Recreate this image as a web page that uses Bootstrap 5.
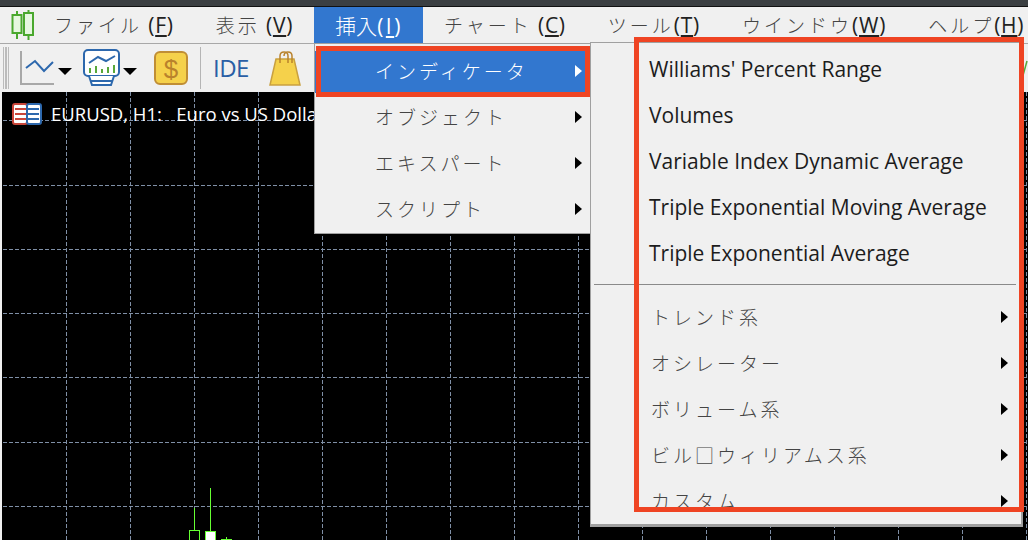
<!DOCTYPE html>
<html lang="ja">
<head>
  <meta charset="UTF-8">
  <meta name="viewport" content="width=device-width, initial-scale=1">
  <title>MetaTrader</title>
  <link href="https://cdn.jsdelivr.net/npm/bootstrap@5.3.2/dist/css/bootstrap.min.css" rel="stylesheet">
  <style>
    html, body { height: 100%; }
    body {
      width: 1028px; height: 540px; overflow: hidden; background: #f0f0f0;
      font-family: "Open Sans", "Noto Sans CJK JP", sans-serif; color: #1a1a1a;
    }
    .app-top { height: 7px; background: #3b3f42; border-bottom: 1px solid #111; }
    .app-menubar { height: 37px; background: #f0f0f0; border-bottom: 1px solid #a8a8a8; }
    .app-logo { width: 33px; padding-left: 11px; }
    .app-menulink {
      padding: 0 21px; height: 36px; line-height: 36px; font-size: 21px; white-space: nowrap; color: #222;
      text-decoration: none; letter-spacing: .75px;
    }
    .app-menulink.is-open { background: #3277cf; color: #fff; padding-right: 20px; letter-spacing: 2.5px; }
    .jp {
      font-family: "Noto Sans CJK JP", sans-serif; font-weight: 300; font-size: 19px;
      letter-spacing: 3px; color: #444;
    }
    .is-open .jp { color: #fff; }
    .app-menulink.is-open .jp { letter-spacing: 0; font-size: 21px; }
    .app-toolbar { height: 48px; background: #f0f0f0; }
    .tool-grip {
      width: 6px; height: 42px; margin-left: 3px;
      background: repeating-linear-gradient(90deg, #bbb 0 1px, transparent 1px 2.5px);
    }
    .tool-sep { width: 1px; height: 42px; background: #b5b5b5; margin-left: 12px; }
    .tool-ide { font-size: 24px; color: #2a5fa5; letter-spacing: -0.5px; margin-left: 12px; }
    .tool-dollar { margin-left: 11px; }
    .tool-bag { margin-left: 20px; }
    .app-chart { height: 448px; margin-left: 2px; background: #000; border-left: 1px solid #000; }
    .app-chart svg { display: block; }
    .chart-title {
      position: absolute; left: 9px; top: 11px; color: #fff; font-size: 18.5px; white-space: pre; line-height: 22px;
    }
    .chart-title span { margin-left: 1px; }
    .ctx-menu.dropdown-menu {
      position: absolute; display: block; margin: 0; padding: 0; min-width: 0; border-radius: 0;
      background: #f0f0f0; border: 1px solid #a0a0a0; font-size: 21px; overflow: hidden;
    }
    .ctx-first { left: 314px; top: 43px; width: 277px; height: 191px; padding-top: 7px !important; }
    .ctx-second {
      left: 590px; top: 42px; width: 433px; height: 485px;
      border-right-width: 2px !important; border-bottom-width: 3px !important;
    }
    .ctx-scroll { height: 464px; overflow: hidden; padding-top: 3px; }
    .ctx-item.dropdown-item {
      position: relative; height: 46px; line-height: 46px; padding: 0; color: #1c1c1c; white-space: nowrap;
    }
    .ctx-item.has-jp.dropdown-item { line-height: 43px; }
    .ctx-first .ctx-item.dropdown-item { padding-left: 60px; }
    .ctx-second .ctx-item.dropdown-item { padding-left: 60px; }
    .ctx-first .ctx-item.is-open.dropdown-item { background: #3277cf; height: 42px; line-height: 40px; margin-bottom: 2px; }
    .ctx-item::after {
      content: ""; position: absolute; top: 50%; margin-top: -7px;
      border-left: 7px solid #000; border-top: 6.5px solid transparent; border-bottom: 6.5px solid transparent;
    }
    .ctx-item.no-arrow::after { display: none; }
    .ctx-first .ctx-item::after { left: 260px; }
    .ctx-second .ctx-item::after { left: 410px; }
    .ctx-first .ctx-item.is-open::after { border-left-color: #fff; }
    .ctx-second .no-arrow.dropdown-item { padding-left: 58px; }
    .ctx-line.dropdown-divider { margin: 8px 5px 10px 3px; border-top: 1px solid #8a8a8a; opacity: 1; }
    .shot-mark { position: absolute; z-index: 1100; border: 5px solid #ef4423; pointer-events: none; }
    .shot-a { left: 316px; top: 46px; width: 274px; height: 51px; }
    .shot-b { left: 634px; top: 37px; width: 390px; height: 475px; }
  </style>
</head>
<body>
<div class="position-relative h-100">
  <div class="app-top"></div>

  <div class="app-menubar d-flex align-items-center">
    <div class="app-logo">
      <svg width="23" height="30" viewBox="0 0 23 30" class="d-block">
        <path d="M6 1V29M17.500 0V30" stroke="#4aa82e" stroke-width="2" fill="none"/>
        <rect x="1.500" y="5" width="9" height="18" fill="#e6f7e0" stroke="#4aa82e" stroke-width="2"/>
        <rect x="13" y="3" width="9" height="22" fill="#e6f7e0" stroke="#4aa82e" stroke-width="2"/>
      </svg>
    </div>
    <a class="app-menulink"><span class="jp">ファイル</span> (<u>F</u>)</a>
    <a class="app-menulink"><span class="jp">表示</span> (<u>V</u>)</a>
    <a class="app-menulink is-open"><span class="jp">挿入</span>(<u>I</u>)</a>
    <a class="app-menulink"><span class="jp">チャート</span> (<u>C</u>)</a>
    <a class="app-menulink"><span class="jp">ツール</span>(<u>T</u>)</a>
    <a class="app-menulink"><span class="jp">ウインドウ</span>(<u>W</u>)</a>
    <a class="app-menulink"><span class="jp">ヘルプ</span>(<u>H</u>)</a>
  </div>

  <div class="app-toolbar d-flex align-items-center">
    <div class="tool-grip"></div>
    <svg width="64" height="40" viewBox="0 0 64 40" class="ms-2">
      <path d="M4 3V36H37" stroke="#a8a8a8" stroke-width="2" fill="none"/>
      <path d="M9 20L18 13L27 23L36 14" stroke="#2d68ad" stroke-width="2" fill="none"/>
      <path d="M41 20H55L48 27Z" fill="#000"/>
    </svg>
    <svg width="62" height="40" viewBox="0 0 62 40">
      <rect x="3" y="2" width="35" height="26" rx="4" fill="#fff" stroke="#2d68ad" stroke-width="2"/>
      <path d="M8 28L11 37H30L33 28M9 33H32" fill="#fff" stroke="#2d68ad" stroke-width="2"/>
      <path d="M8 15L17 9L25 13L34 8" stroke="#2d68ad" stroke-width="2" fill="none"/>
      <path d="M9 20V25M15 18V25M21 21V25M27 19V25M33 17V25" stroke="#58a83a" stroke-width="2"/>
      <path d="M42 20H56L49 27Z" fill="#000"/>
    </svg>
    <svg width="34" height="34" viewBox="0 0 34 34" class="tool-dollar">
      <rect x="1" y="1" width="32" height="32" rx="5" fill="#f5d14b" stroke="#c08e35" stroke-width="2"/>
      <text x="17" y="26.500" font-size="26" text-anchor="middle" fill="#b9822c" font-family="Liberation Sans">$</text>
    </svg>
    <div class="tool-sep"></div>
    <span class="tool-ide">IDE</span>
    <svg width="32" height="36" viewBox="0 0 32 36" class="tool-bag">
      <path d="M7 9L1 35H31L25 9Z" fill="#f5d14b" stroke="#c9a040" stroke-width="1.500"/>
      <path d="M11 13V6Q11 2 15 2Q19 2 19 6V13M15 6Q15 2 19 2Q23 2 23 6V13" stroke="#b9822c" stroke-width="1.500" fill="none"/>
    </svg>
    <svg width="6" height="30" viewBox="0 0 6 30" class="ms-auto">
      <path d="M0 26L5 8" stroke="#58a83a" stroke-width="1.500"/>
    </svg>
  </div>

  <div class="app-chart position-relative">
    <svg id="chartGrid" width="1025" height="448"></svg>
    <div class="chart-title d-flex align-items-center">
      <svg width="30" height="22" viewBox="0 0 30 22" class="me-2">
        <rect x="1" y="1" width="14" height="20" rx="2" fill="#fff" stroke="#c9463a" stroke-width="2"/>
        <rect x="15" y="1" width="14" height="20" rx="2" fill="#fff" stroke="#2d68ad" stroke-width="2"/>
        <path d="M3 6H14M3 11H14M3 16H14" stroke="#c9463a" stroke-width="2"/>
        <path d="M16 6H27M16 11H27M16 16H27" stroke="#2d68ad" stroke-width="2"/>
      </svg><span>EURUSD, H1:   Euro vs US Dollar</span>
    </div>
  </div>

  <div class="dropdown-menu show ctx-menu ctx-first">
    <a class="dropdown-item ctx-item has-jp is-open"><span class="jp">インディケータ</span></a>
    <a class="dropdown-item ctx-item has-jp"><span class="jp">オブジェクト</span></a>
    <a class="dropdown-item ctx-item has-jp"><span class="jp">エキスパート</span></a>
    <a class="dropdown-item ctx-item has-jp"><span class="jp">スクリプト</span></a>
  </div>

  <div class="dropdown-menu show ctx-menu ctx-second">
    <div class="ctx-scroll">
      <a class="dropdown-item ctx-item no-arrow">Williams' Percent Range</a>
      <a class="dropdown-item ctx-item no-arrow">Volumes</a>
      <a class="dropdown-item ctx-item no-arrow">Variable Index Dynamic Average</a>
      <a class="dropdown-item ctx-item no-arrow">Triple Exponential Moving Average</a>
      <a class="dropdown-item ctx-item no-arrow">Triple Exponential Average</a>
      <hr class="dropdown-divider ctx-line">
      <a class="dropdown-item ctx-item has-jp"><span class="jp">トレンド系</span></a>
      <a class="dropdown-item ctx-item has-jp"><span class="jp">オシレーター</span></a>
      <a class="dropdown-item ctx-item has-jp"><span class="jp">ボリューム系</span></a>
      <a class="dropdown-item ctx-item has-jp"><span class="jp">ビル□ウィリアムス系</span></a>
      <a class="dropdown-item ctx-item has-jp"><span class="jp">カスタム</span></a>
    </div>
  </div>

  <div class="shot-mark shot-a"></div>
  <div class="shot-mark shot-b"></div>
</div>

<script>
// chart is offset 3px,92px from the window
const svg = document.getElementById('chartGrid');
let out = '';
for (let x = 66; x <= 1026; x += 64) {
  out += `<line x1="${x - 2.5}" y1="0" x2="${x - 2.5}" y2="448" stroke="#7f8fa6" stroke-dasharray="4 2"/>`;
}
[120, 185, 249, 313, 377, 442, 506].forEach((y) => {
  out += `<line x1="0" y1="${y - 91.5}" x2="1025" y2="${y - 91.5}" stroke="#7f8fa6" stroke-dasharray="4 2"/>`;
});
const green = '#66ff33';
out += `<path d="M191.500 416V438M207.500 396V440M223.500 445V448" stroke="${green}" fill="none"/>`;
out += `<rect x="186.500" y="438.500" width="10" height="12" fill="#000" stroke="${green}"/>`;
out += `<rect x="202.500" y="439.500" width="10" height="12" fill="#fff" stroke="${green}"/>`;
out += `<rect x="218.500" y="447.500" width="10" height="12" fill="#000" stroke="${green}"/>`;
svg.innerHTML = out;
</script>
<script src="https://cdn.jsdelivr.net/npm/bootstrap@5.3.2/dist/js/bootstrap.bundle.min.js"></script>
</body>
</html>
